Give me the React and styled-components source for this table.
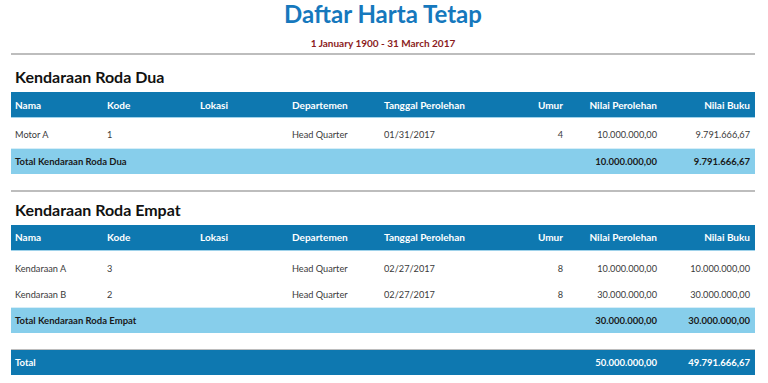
import React from 'react'
import styled, { createGlobalStyle } from 'styled-components'

const blue = '#0e78b0'
const lightBlue = '#87ceeb'
const titleBlue = '#1678bd'
const darkRed = '#8b1c1c'
const line = '#bdbdbd'

const GlobalStyle = createGlobalStyle`
    html, body {
        margin: 0;
        padding: 0;
        background: #ffffff;
    }
    body {
        font-family: Lato, "Open Sans", sans-serif;
        color: #333333;
    }
`

const Page = styled.div`
    width: 744px;
    padding: 0 13px 0 11px;
    display: flex;
    flex-direction: column;
`

const Title = styled.h1`
    margin: 0;
    height: 30px;
    text-align: center;
    font-size: 24px;
    font-weight: 700;
    line-height: 27px;
    color: ${titleBlue};
`

const Period = styled.div`
    text-align: center;
    font-size: 10px;
    font-weight: 700;
    line-height: 14px;
    padding-top: 6px;
    color: ${darkRed};
`

const Rule = styled.hr`
    margin: ${props => props.top || 0}px 0 0;
    border: 0;
    border-top: 2px solid ${line};
    height: 0;
`

const SectionTitle = styled.h2`
    margin: 0;
    padding: ${props => props.top}px 0 0 4px;
    height: 25px;
    font-size: 16px;
    font-weight: 700;
    line-height: 20px;
    color: #111111;
`

const Table = styled.table`
    width: 100%;
    border-collapse: collapse;
    table-layout: fixed;
    font-size: 10px;
`

const HeadRow = styled.tr`
    background: ${blue};
    border-bottom: 1px solid #9fd2ea;
`

const Th = styled.th`
    height: 25px;
    padding: 0 5px 0 4px;
    color: #ffffff;
    font-weight: 700;
    text-align: ${props => props.right ? 'right' : 'left'};
`

const Spacer = styled.tr`
    height: ${props => props.h}px;
`

const Td = styled.td`
    height: 26px;
    padding: 0 5px 0 4px;
    color: #3a3a3a;
    font-size: 9.2px;
    font-weight: 400;
    text-align: ${props => props.right ? 'right' : 'left'};
`

const TotalRow = styled.tr`
    background: ${props => props.grand ? blue : lightBlue};
    border-top: 1px solid ${props => props.grand ? line : '#d6eef8'};
`

const TotalTd = styled.td`
    height: 25px;
    padding: 0 5px 0 4px;
    font-size: 9.5px;
    font-weight: 700;
    color: ${props => props.grand ? '#ffffff' : '#1a1a1a'};
    text-align: ${props => props.right ? 'right' : 'left'};
`

const columns = [
    { label: 'Nama', w: 92 },
    { label: 'Kode', w: 93 },
    { label: 'Lokasi', w: 92 },
    { label: 'Departemen', w: 92 },
    { label: 'Tanggal Perolehan', w: 94 },
    { label: 'Umur', w: 94, right: true },
    { label: 'Nilai Perolehan', w: 94, right: true },
    { label: 'Nilai Buku', w: 93, right: true },
]

const groups = [
    {
        name: 'Kendaraan Roda Dua',
        top: 12,
        gap: 4,
        rows: [
            ['Motor A', '1', '', 'Head Quarter', '01/31/2017', '4', '10.000.000,00', '9.791.666,67'],
        ],
        total: ['10.000.000,00', '9.791.666,67'],
    },
    {
        name: 'Kendaraan Roda Empat',
        top: 8,
        gap: 5,
        rows: [
            ['Kendaraan A', '3', '', 'Head Quarter', '02/27/2017', '8', '10.000.000,00', '10.000.000,00'],
            ['Kendaraan B', '2', '', 'Head Quarter', '02/27/2017', '8', '30.000.000,00', '30.000.000,00'],
        ],
        total: ['30.000.000,00', '30.000.000,00'],
    },
]

function Colgroup() {
    return (
        <colgroup>
            {columns.map(c => <col key={c.label} style={{ width: c.w }} />)}
        </colgroup>
    )
}

function Group({ group }) {
    return (
        <>
            <SectionTitle top={group.top}>{group.name}</SectionTitle>
            <Table>
                <Colgroup />
                <thead>
                    <HeadRow>
                        {columns.map(c => <Th key={c.label} right={c.right}>{c.label}</Th>)}
                    </HeadRow>
                </thead>
                <tbody>
                    <Spacer h={group.gap} />
                    {group.rows.map(r => (
                        <tr key={r[0]}>
                            {r.map((v, i) => <Td key={i} right={columns[i].right}>{v}</Td>)}
                        </tr>
                    ))}
                    <TotalRow>
                        <TotalTd colSpan={6}>Total {group.name}</TotalTd>
                        <TotalTd right>{group.total[0]}</TotalTd>
                        <TotalTd right>{group.total[1]}</TotalTd>
                    </TotalRow>
                </tbody>
            </Table>
        </>
    )
}

export default function App() {
    return (
        <>
            <GlobalStyle />
            <Page>
                <Title>Daftar Harta Tetap</Title>
                <Period>1 January 1900 - 31 March 2017</Period>
                <Rule top={3} />
                <Group group={groups[0]} />
                <Rule top={16} />
                <Group group={groups[1]} />
                <Table>
                    <Colgroup />
                    <tbody>
                        <Spacer h={16} />
                        <TotalRow grand>
                            <TotalTd grand colSpan={6}>Total</TotalTd>
                            <TotalTd grand right>50.000.000,00</TotalTd>
                            <TotalTd grand right>49.791.666,67</TotalTd>
                        </TotalRow>
                    </tbody>
                </Table>
            </Page>
        </>
    )
}
